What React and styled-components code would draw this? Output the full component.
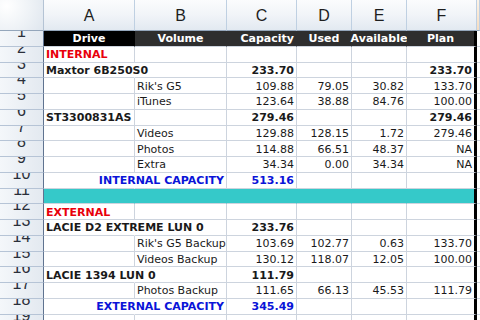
import React from "react";
import styled, { createGlobalStyle, css } from "styled-components";

const Global = createGlobalStyle`
  html, body { margin: 0; padding: 0; background: #fff; overflow: hidden; }
  #root { width: 480px; height: 320px; overflow: hidden; }
`;

const GRID = "#cdd4de";
const COLS = [
  { key: "A", w: 91 },
  { key: "B", w: 92 },
  { key: "C", w: 70 },
  { key: "D", w: 55 },
  { key: "E", w: 55 },
  { key: "F", w: 70 },
  { key: "G", w: 3 },
];

const Sheet = styled.div`
  display: grid;
  grid-template-columns: 44px ${COLS.map((c) => c.w + "px").join(" ")};
  grid-template-rows: 31px repeat(19, 15.75px);
  width: 480px;
  height: 320px;
  background: #fff;
  font-family: "DejaVu Sans", Verdana, sans-serif;
  font-size: 11px;
  color: #1a1a1a;
`;

const Corner = styled.div`
  box-sizing: border-box;
  border-right: 1px solid #b4c3d4;
  border-bottom: 1px solid #94a6bb;
  background: radial-gradient(circle at 15% 20%, #ffffff 0%, #eef2f6 55%, #dfe6ee 100%);
`;

const ColHead = styled.div`
  box-sizing: border-box;
  border-right: 1px solid #bfd0e2;
  border-bottom: 1px solid #94a6bb;
  background: ${(p) =>
    p.$peach
      ? "linear-gradient(#fdf3e7, #f5dcc0)"
      : "linear-gradient(#fbfcfd 0%, #f1f4f8 50%, #e2e9f1 100%)"};
  display: flex;
  align-items: center;
  justify-content: center;
  font-family: "Liberation Sans", Arial, sans-serif;
  font-size: 16px;
  color: #1e1e1e;
  padding-top: 1px;
`;

const RowNum = styled.div`
  box-sizing: border-box;
  border-right: 1px solid #5f7390;
  border-bottom: 1px solid #b6c4d6;
  background: linear-gradient(to right, #f4f7fa, #e3e9f0);
  overflow: hidden;
  display: flex;
  justify-content: center;
  align-items: flex-start;
  font-family: "Liberation Sans", Arial, sans-serif;
  font-size: 16px;
  color: #2a2f3a;
  span {
    display: block;
    line-height: 16px;
    margin-top: -7px;
  }
`;

const Cell = styled.div`
  box-sizing: border-box;
  border-bottom: 1px solid ${GRID};
  border-right: 1px solid ${(p) => (p.$noRight ? "transparent" : GRID)};
  display: flex;
  align-items: center;
  justify-content: ${(p) =>
    p.$align === "right" ? "flex-end" : p.$align === "center" ? "center" : "flex-start"};
  padding: 1px 2px 0 2px;
  white-space: nowrap;
  min-width: 0;
  font-weight: ${(p) => (p.$bold ? 700 : 400)};
  color: ${(p) =>
    p.$tone === "red" ? "#e8000b" : p.$tone === "blue" ? "#0a14d8" : "#1a1a1a"};
  ${(p) =>
    p.$head &&
    css`
      background: ${p.$black ? "#000" : "#2e2e2e"};
      color: #fff;
      font-weight: 700;
      border-right-color: transparent;
      border-bottom-color: ${GRID};
    `}
  ${(p) =>
    p.$fill &&
    css`
      background: ${p.$fill};
      border-right-color: transparent;
    `}
  ${(p) =>
    p.$edge &&
    css`
      border-right: 3px solid #000;
    `}
  span { display: block; }
`;

const header = [
  { t: "Drive", a: "center", black: true },
  { t: "Volume", a: "center" },
  { t: "Capacity", a: "right" },
  { t: "Used", a: "center" },
  { t: "Available", a: "center" },
  { t: "Plan", a: "center" },
];

const R = (t, extra = {}) => ({ t, a: "right", ...extra });

const rows = [
  null,
  { cells: { A: { t: "INTERNAL", bold: true, tone: "red" } } },
  {
    overflowA: true,
    cells: {
      A: { t: "Maxtor 6B250S0", bold: true },
      C: R("233.70", { bold: true }),
      F: R("233.70", { bold: true }),
    },
  },
  { cells: { B: { t: "Rik's G5" }, C: R("109.88"), D: R("79.05"), E: R("30.82"), F: R("133.70") } },
  { cells: { B: { t: "iTunes" }, C: R("123.64"), D: R("38.88"), E: R("84.76"), F: R("100.00") } },
  {
    cells: {
      A: { t: "ST3300831AS", bold: true },
      C: R("279.46", { bold: true }),
      F: R("279.46", { bold: true }),
    },
  },
  { cells: { B: { t: "Videos" }, C: R("129.88"), D: R("128.15"), E: R("1.72"), F: R("279.46") } },
  { cells: { B: { t: "Photos" }, C: R("114.88"), D: R("66.51"), E: R("48.37"), F: R("NA") } },
  { cells: { B: { t: "Extra" }, C: R("34.34"), D: R("0.00"), E: R("34.34"), F: R("NA") } },
  {
    overflowA: true,
    cells: {
      B: R("INTERNAL CAPACITY", { bold: true, tone: "blue" }),
      C: R("513.16", { bold: true, tone: "blue" }),
    },
  },
  { fill: "#35c9c9", cells: {} },
  { cells: { A: { t: "EXTERNAL", bold: true, tone: "red" } } },
  {
    overflowA: true,
    cells: {
      A: { t: "LACIE D2 EXTREME LUN 0", bold: true },
      C: R("233.76", { bold: true }),
    },
  },
  { cells: { B: { t: "Rik's G5 Backup" }, C: R("103.69"), D: R("102.77"), E: R("0.63"), F: R("133.70") } },
  { cells: { B: { t: "Videos Backup" }, C: R("130.12"), D: R("118.07"), E: R("12.05"), F: R("100.00") } },
  {
    overflowA: true,
    cells: {
      A: { t: "LACIE 1394 LUN 0", bold: true },
      C: R("111.79", { bold: true }),
    },
  },
  { cells: { B: { t: "Photos Backup" }, C: R("111.65"), D: R("66.13"), E: R("45.53"), F: R("111.79") } },
  {
    overflowA: true,
    cells: {
      B: R("EXTERNAL CAPACITY", { bold: true, tone: "blue" }),
      C: R("345.49", { bold: true, tone: "blue" }),
    },
  },
  { cells: {} },
];

export default function App() {
  return (
    <>
      <Global />
      <Sheet>
        <Corner />
        {COLS.map((c) => (
          <ColHead key={c.key} $peach={c.key === "G"}>
            {c.key === "G" ? "" : c.key}
          </ColHead>
        ))}

        <RowNum>
          <span>1</span>
        </RowNum>
        {header.map((h, i) => (
          <Cell
            key={"h" + i}
            $head
            $black={h.black}
            $align={h.a}
            $edge={i === 5}
          >
            <span>{h.t}</span>
          </Cell>
        ))}
        <Cell />

        {rows.slice(1).map((row, ri) => {
          const n = ri + 2;
          return (
            <React.Fragment key={n}>
              <RowNum>
                <span>{n}</span>
              </RowNum>
              {COLS.map((c) => {
                const d = row.cells[c.key];
                return (
                  <Cell
                    key={c.key}
                    $align={d?.a}
                    $bold={d?.bold}
                    $tone={d?.tone}
                    $fill={c.key !== "G" ? row.fill : undefined}
                    $noRight={c.key === "A" && row.overflowA}
                    $edge={c.key === "F"}
                  >
                    {d ? <span>{d.t}</span> : null}
                  </Cell>
                );
              })}
            </React.Fragment>
          );
        })}
      </Sheet>
    </>
  );
}
